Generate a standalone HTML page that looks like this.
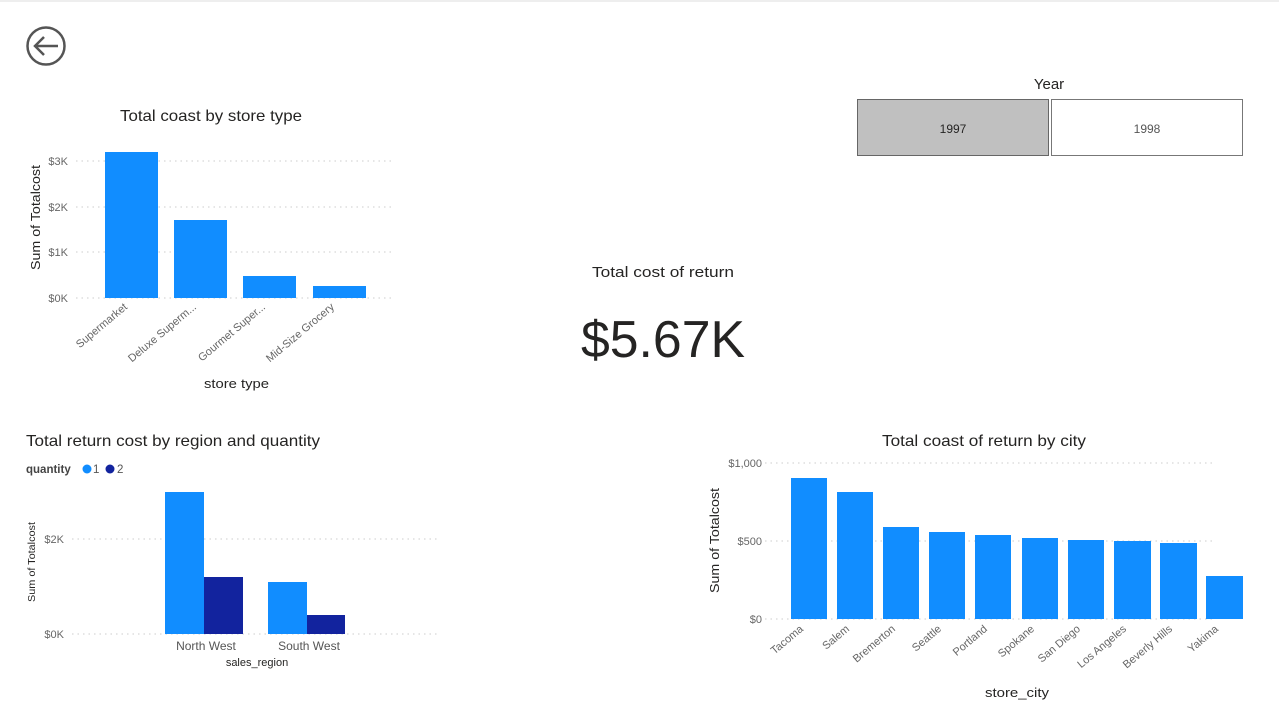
<!DOCTYPE html>
<html><head><meta charset="utf-8"><style>
html,body{margin:0;padding:0;background:#fff;}
svg{display:block;font-family:"Liberation Sans",sans-serif;}
</style></head><body>
<svg width="1279" height="716" viewBox="0 0 1279 716" xmlns="http://www.w3.org/2000/svg">
<rect x="0" y="0" width="1279" height="2" fill="#eee"/>
<circle cx="46" cy="46" r="18.5" fill="none" stroke="#555" stroke-width="2.5"/>
<path d="M58 46H35M44 37L35 46L44 55" fill="none" stroke="#555" stroke-width="2.5"/>

<!-- chart 1 -->
<text x="120" y="121" font-size="16" fill="#252423" textLength="182" lengthAdjust="spacingAndGlyphs">Total coast by store type</text>
<g stroke="#ccc" stroke-dasharray="1.5 4" stroke-width="1">
<line x1="76" y1="161" x2="395" y2="161"/><line x1="76" y1="207" x2="395" y2="207"/><line x1="76" y1="252" x2="395" y2="252"/><line x1="76" y1="298" x2="395" y2="298"/>
</g>
<g font-size="11" fill="#666" text-anchor="end">
<text x="68" y="165">$3K</text><text x="68" y="211">$2K</text><text x="68" y="256">$1K</text><text x="68" y="302">$0K</text>
</g>
<text transform="translate(40,270) rotate(-90)" font-size="13" fill="#252423" textLength="105" lengthAdjust="spacingAndGlyphs">Sum of Totalcost</text>
<g fill="#118DFF">
<rect x="105" y="152" width="53" height="146"/><rect x="174" y="220" width="53" height="78"/><rect x="243" y="276" width="53" height="22"/><rect x="313" y="286" width="53" height="12"/>
</g>
<g font-size="11" fill="#666" text-anchor="end">
<text transform="translate(128,308) rotate(-40)">Supermarket</text>
<text transform="translate(197,308) rotate(-40)">Deluxe Superm...</text>
<text transform="translate(266,308) rotate(-40)">Gourmet Super...</text>
<text transform="translate(335,308) rotate(-40)">Mid-Size Grocery</text>
</g>
<text x="204" y="388" font-size="13" fill="#252423" textLength="65" lengthAdjust="spacingAndGlyphs">store type</text>

<!-- year slicer -->
<text x="1049" y="89" font-size="15" fill="#252423" text-anchor="middle">Year</text>
<rect x="857.5" y="99.5" width="191" height="56" fill="#c0c0c0" stroke="#666"/>
<rect x="1051.5" y="99.5" width="191" height="56" fill="#fff" stroke="#777"/>
<text x="953" y="133" font-size="12" fill="#252423" text-anchor="middle">1997</text>
<text x="1147" y="133" font-size="12" fill="#555" text-anchor="middle">1998</text>

<!-- card -->
<text x="592" y="277" font-size="15" fill="#252423" textLength="142" lengthAdjust="spacingAndGlyphs">Total cost of return</text>
<text x="581" y="357" font-size="52" fill="#252423" textLength="164" lengthAdjust="spacingAndGlyphs">$5.67K</text>

<!-- chart 2 -->
<text x="26" y="446" font-size="16" fill="#252423" textLength="294" lengthAdjust="spacingAndGlyphs">Total return cost by region and quantity</text>
<text x="26" y="473" font-size="11.5" font-weight="bold" fill="#444">quantity</text>
<circle cx="87" cy="469" r="4.5" fill="#118DFF"/><text x="93" y="473" font-size="11.5" fill="#555">1</text>
<circle cx="110" cy="469" r="4.5" fill="#12239E"/><text x="117" y="473" font-size="11.5" fill="#555">2</text>
<g stroke="#ccc" stroke-dasharray="1.5 4">
<line x1="72" y1="539" x2="440" y2="539"/><line x1="72" y1="634" x2="440" y2="634"/>
</g>
<g font-size="11" fill="#666" text-anchor="end"><text x="64" y="543">$2K</text><text x="64" y="638">$0K</text></g>
<text transform="translate(35,602) rotate(-90)" font-size="10" fill="#252423" textLength="80" lengthAdjust="spacingAndGlyphs">Sum of Totalcost</text>
<rect x="165" y="492" width="39" height="142" fill="#118DFF"/>
<rect x="204" y="577" width="39" height="57" fill="#12239E"/>
<rect x="268" y="582" width="39" height="52" fill="#118DFF"/>
<rect x="307" y="615" width="38" height="19" fill="#12239E"/>
<g font-size="12" fill="#555" text-anchor="middle"><text x="206" y="650">North West</text><text x="309" y="650">South West</text></g>
<text x="257" y="666" font-size="11" fill="#252423" text-anchor="middle">sales_region</text>

<!-- chart 3 -->
<text x="882" y="446" font-size="16" fill="#252423" textLength="204" lengthAdjust="spacingAndGlyphs">Total coast of return by city</text>
<g stroke="#ccc" stroke-dasharray="1.5 4">
<line x1="765" y1="463" x2="1212" y2="463"/><line x1="765" y1="541" x2="1212" y2="541"/><line x1="765" y1="619" x2="1212" y2="619"/>
</g>
<g font-size="11" fill="#666" text-anchor="end"><text x="762" y="467">$1,000</text><text x="762" y="545">$500</text><text x="762" y="623">$0</text></g>
<text transform="translate(719,593) rotate(-90)" font-size="13" fill="#252423" textLength="105" lengthAdjust="spacingAndGlyphs">Sum of Totalcost</text>
<g fill="#118DFF">
<rect x="791" y="478" width="36" height="141"/>
<rect x="837" y="492" width="36" height="127"/>
<rect x="883" y="527" width="36" height="92"/>
<rect x="929" y="532" width="36" height="87"/>
<rect x="975" y="535" width="36" height="84"/>
<rect x="1022" y="538" width="36" height="81"/>
<rect x="1068" y="540" width="36" height="79"/>
<rect x="1114" y="541" width="37" height="78"/>
<rect x="1160" y="543" width="37" height="76"/>
<rect x="1206" y="576" width="37" height="43"/>
</g>
<g font-size="11" fill="#666" text-anchor="end">
<text transform="translate(804,630) rotate(-40)">Tacoma</text>
<text transform="translate(850,630) rotate(-40)">Salem</text>
<text transform="translate(896,630) rotate(-40)">Bremerton</text>
<text transform="translate(942,630) rotate(-40)">Seattle</text>
<text transform="translate(988,630) rotate(-40)">Portland</text>
<text transform="translate(1035,630) rotate(-40)">Spokane</text>
<text transform="translate(1081,630) rotate(-40)">San Diego</text>
<text transform="translate(1127,630) rotate(-40)">Los Angeles</text>
<text transform="translate(1173,630) rotate(-40)">Beverly Hills</text>
<text transform="translate(1219,630) rotate(-40)">Yakima</text>
</g>
<text x="985" y="697" font-size="13" fill="#252423" textLength="64" lengthAdjust="spacingAndGlyphs">store_city</text>
</svg>
</body></html>
